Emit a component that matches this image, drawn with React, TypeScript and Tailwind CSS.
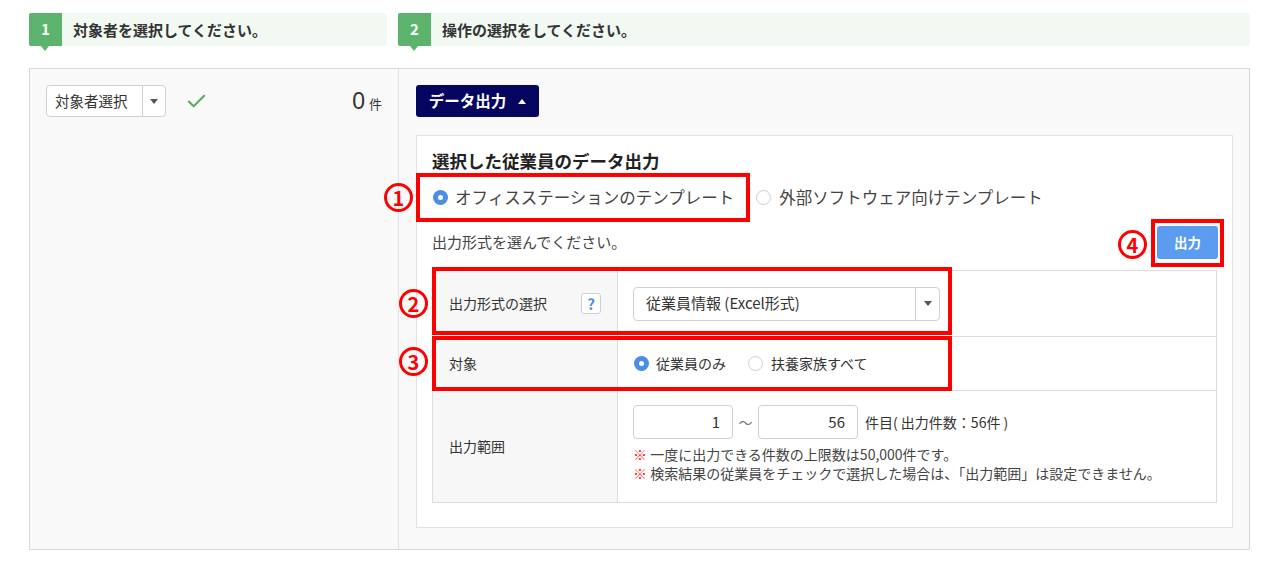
import { Check } from 'lucide-react';

const font = { fontFamily: '"Noto Sans CJK JP", "Liberation Sans", sans-serif' };

function Step({ n, text, width }: { n: number; text: string; width: string }) {
  return (
    <div className={`flex h-[33px] items-center rounded-r-[4px] bg-[#f2f8f2] ${width}`}>
      <div className="relative flex h-[33px] w-[33px] items-center justify-center rounded-l-[2px] bg-[#5cb46c] text-[15px] font-bold text-white">
        {n}
        <span className="absolute left-[12px] top-[33px] h-0 w-0 border-x-[4px] border-t-[5px] border-x-transparent border-t-[#5cb46c]" />
      </div>
      <span className="ml-[11px] text-[15px] font-bold leading-none text-[#333]">{text}</span>
    </div>
  );
}

function Caret() {
  return <span className="h-0 w-0 border-x-[4px] border-t-[5px] border-x-transparent border-t-[#555]" />;
}

function Radio({ checked }: { checked?: boolean }) {
  return checked ? (
    <span className="flex h-[15px] w-[15px] shrink-0 items-center justify-center rounded-full bg-[#4a8ee6]">
      <span className="h-[5px] w-[5px] rounded-full bg-white" />
    </span>
  ) : (
    <span className="block h-[15px] w-[15px] shrink-0 rounded-full border border-[#cfcfcf] bg-white" />
  );
}

function Num({ n, className }: { n: number; className: string }) {
  return (
    <div
      className={`absolute flex h-[29px] w-[29px] items-center justify-center rounded-full border-[3px] border-[#ff0000] text-[20px] font-bold leading-none text-[#ff0000] ${className}`}
    >
      {n}
    </div>
  );
}

export default function App() {
  return (
    <div className="relative h-[561px] w-[1280px] overflow-hidden bg-white text-[#333]" style={font}>
      <div className="flex gap-[11px] pl-[29px] pt-[13px]">
        <Step n={1} text="対象者を選択してください。" width="w-[358px]" />
        <Step n={2} text="操作の選択をしてください。" width="w-[852px]" />
      </div>

      <div className="ml-[29px] mt-[22px] flex h-[482px] w-[1221px] border border-[#d8d8d8] bg-[#f9f9f9]">
        {/* left column */}
        <div className="flex w-[369px] items-start border-r border-[#e2e2e2] px-[16px] pt-[16px]">
          <div className="flex h-[32px] w-full items-center">
            <div className="flex h-[32px] w-[120px] items-stretch rounded-[4px] border border-[#d0d0d0] bg-white">
              <span className="flex flex-1 items-center pl-[8px] text-[14.5px]">対象者選択</span>
              <span className="flex w-[23px] items-center justify-center border-l border-[#d0d0d0]">
                <Caret />
              </span>
            </div>
            <Check className="ml-[19px] h-[23px] w-[23px] text-[#4cae5c]" strokeWidth={2} />
            <div className="ml-auto flex items-baseline">
              <span className="text-[23px] font-light leading-none" style={{ fontFamily: '"Liberation Sans", sans-serif' }}>0</span>
              <span className="ml-[4px] text-[13px] leading-none">件</span>
            </div>
          </div>
        </div>

        {/* right column */}
        <div className="flex flex-1 flex-col pb-[21px] pl-[17px] pr-[16px] pt-[16px]">
          <div className="flex h-[32px] w-[123px] items-center justify-center gap-[12px] rounded-[3px] bg-[#05055f] text-[15.5px] font-bold text-white">
            データ出力
            <span className="h-0 w-0 border-x-[4px] border-b-[5px] border-x-transparent border-b-white" />
          </div>

          <div className="mt-[18px] flex flex-1 flex-col border border-[#e2e2e2] bg-white pl-[15px] pr-[15px] pt-[14px]">
            <div className="text-[17.5px] font-bold leading-[22px] text-[#222]">選択した従業員のデータ出力</div>

            <div className="mt-[7px] flex h-[36px] items-center pl-[1px] text-[16.5px] text-[#444]">
              <Radio checked />
              <span className="ml-[7px]">オフィスステーションのテンプレート</span>
              <span className="ml-[22px]"><Radio /></span>
              <span className="ml-[8px]">外部ソフトウェア向けテンプレート</span>
            </div>

            <div className="mt-[11px] flex h-[33px] items-center justify-between">
              <span className="text-[15px] text-[#444]">出力形式を選んでください。</span>
              <div className="mr-[-1px] flex h-[33px] w-[61px] items-center justify-center rounded-[3px] bg-[#5b9cf0] text-[13.5px] font-bold text-white">
                出力
              </div>
            </div>

            <div className="mt-[11px] border border-[#dcdcdc] text-[14px]">
              <div className="flex h-[66px] border-b border-[#dcdcdc]">
                <div className="flex w-[185px] items-center justify-between border-r border-[#dcdcdc] bg-[#f7f7f7] pl-[16px] pr-[16px]">
                  <span>出力形式の選択</span>
                  <span className="flex h-[21px] w-[20px] items-center justify-center rounded-[3px] border border-[#d0d0d0] bg-white text-[15px] font-bold leading-none text-[#4a8ee6]">
                    ?
                  </span>
                </div>
                <div className="flex items-center pl-[15px]">
                  <div className="flex h-[34px] w-[307px] items-stretch rounded-[4px] border border-[#d0d0d0] bg-white">
                    <span className="flex flex-1 items-center pl-[12px] text-[15px]">従業員情報 (Excel形式)</span>
                    <span className="flex w-[24px] items-center justify-center border-l border-[#d0d0d0]">
                      <Caret />
                    </span>
                  </div>
                </div>
              </div>

              <div className="flex h-[54px] border-b border-[#dcdcdc]">
                <div className="flex w-[185px] items-center border-r border-[#dcdcdc] bg-[#f7f7f7] pl-[16px]">対象</div>
                <div className="flex items-center pl-[16px]">
                  <Radio checked />
                  <span className="ml-[7px]">従業員のみ</span>
                  <span className="ml-[22px]"><Radio /></span>
                  <span className="ml-[8px]">扶養家族すべて</span>
                </div>
              </div>

              <div className="flex h-[111px]">
                <div className="flex w-[185px] items-center border-r border-[#dcdcdc] bg-[#f7f7f7] pl-[16px]">出力範囲</div>
                <div className="flex flex-col pl-[15px] pt-[14px]">
                  <div className="flex h-[34px] items-center">
                    <div className="flex h-[34px] w-[100px] items-center justify-end rounded-[4px] border border-[#d0d0d0] pr-[12px] text-[15px]">1</div>
                    <span className="w-[25px] text-center text-[#777]">〜</span>
                    <div className="flex h-[34px] w-[100px] items-center justify-end rounded-[4px] border border-[#d0d0d0] pr-[12px] text-[15px]">56</div>
                    <span className="ml-[7px]">件目( 出力件数：56件 )</span>
                  </div>
                  <div className="mt-[6px] leading-[19px] text-[#444]">
                    <div><span className="font-bold text-[#ff1a1a]">※</span> 一度に出力できる件数の上限数は50,000件です。</div>
                    <div><span className="font-bold text-[#ff1a1a]">※</span> 検索結果の従業員をチェックで選択した場合は、「出力範囲」は設定できません。</div>
                  </div>
                </div>
              </div>
            </div>
          </div>
        </div>
      </div>

      {/* annotations */}
      <div className="absolute left-[416px] top-[173px] h-[49px] w-[334px] border-4 border-[#ff0000]" />
      <div className="absolute left-[432px] top-[267px] h-[68px] w-[520px] border-4 border-[#ff0000]" />
      <div className="absolute left-[432px] top-[336px] h-[55px] w-[520px] border-4 border-[#ff0000]" />
      <div className="absolute left-[1151px] top-[219px] h-[48px] w-[73px] border-4 border-[#ff0000]" />
      <Num n={1} className="left-[384px] top-[183px]" />
      <Num n={2} className="left-[399px] top-[289px]" />
      <Num n={3} className="left-[399px] top-[347px]" />
      <Num n={4} className="left-[1118px] top-[230px]" />
    </div>
  );
}
